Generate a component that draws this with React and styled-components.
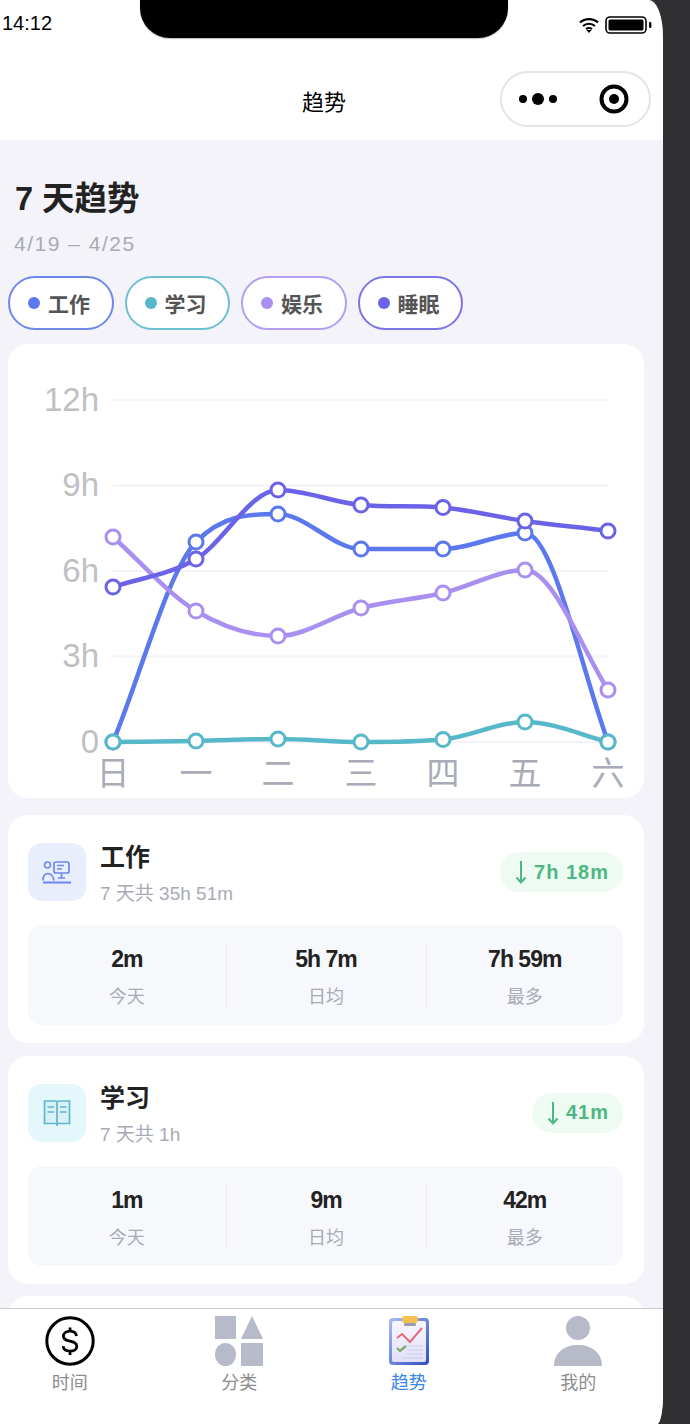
import React from 'react';
import styled, { createGlobalStyle } from 'styled-components';

const FONT = `'Liberation Sans', 'Noto Sans CJK SC', sans-serif`;

const chips = [
  { name: '工作', color: '#6f88ea', dot: '#5b78ee' },
  { name: '学习', color: '#6cc0cf', dot: '#56b8c9' },
  { name: '娱乐', color: '#b59ef0', dot: '#a98ff0' },
  { name: '睡眠', color: '#7a74e6', dot: '#6a63e8' },
];

const xs = [113, 196, 278, 361, 443, 525, 608];
const days = ['日', '一', '二', '三', '四', '五', '六'];
const grid = [
  { label: '12h', y: 400 },
  { label: '9h', y: 485.5 },
  { label: '6h', y: 571 },
  { label: '3h', y: 656.5 },
  { label: '0', y: 742 },
];
const series = [
  { color: '#5b78ee', ys: [742, 542, 514, 549, 549, 533, 742] },
  { color: '#a98ff0', ys: [537, 611, 636, 608, 593, 570, 690] },
  { color: '#6a63e8', ys: [587, 559, 490, 505, 507.5, 521, 531] },
  { color: '#56b8c9', ys: [742, 741, 739, 742, 739.5, 722, 742] },
];

const stats = [
  {
    name: '工作',
    total: '7 天共 35h 51m',
    delta: '7h 18m',
    tint: '#e9eefd',
    values: ['2m', '5h 7m', '7h 59m'],
    icon: 'work',
  },
  {
    name: '学习',
    total: '7 天共 1h',
    delta: '41m',
    tint: '#e4f7fa',
    values: ['1m', '9m', '42m'],
    icon: 'book',
  },
];
const statLabels = ['今天', '日均', '最多'];

// catmull-rom tangents, flat at peaks and clamped so the curve doesn't overshoot
const smoothPath = (ys) => {
  const n = ys.length;
  const slopes = [];
  for (let i = 0; i < n - 1; i++) slopes.push((ys[i + 1] - ys[i]) / (xs[i + 1] - xs[i]));
  const m = new Array(n).fill(0);
  for (let i = 1; i < n - 1; i++) {
    const s0 = slopes[i - 1];
    const s1 = slopes[i];
    if (s0 * s1 <= 0) continue;
    const limit = 3 * Math.min(Math.abs(s0), Math.abs(s1));
    m[i] = Math.sign(s0) * Math.min(Math.abs(s0 + s1) / 2, limit);
  }
  m[0] = slopes[0];
  m[n - 1] = slopes[n - 2] * 1.1;
  let d = `M${xs[0]} ${ys[0]}`;
  for (let i = 0; i < n - 1; i++) {
    const dx = (xs[i + 1] - xs[i]) / 3;
    d += ` C${xs[i] + dx} ${ys[i] + m[i] * dx} ${xs[i + 1] - dx} ${ys[i + 1] - m[i + 1] * dx} ${xs[i + 1]} ${ys[i + 1]}`;
  }
  return d;
};

const WorkIcon = () => (
  <svg width="30" height="23" viewBox="0 0 30 23" fill="none" stroke="#6f86ea" strokeWidth="1.7">
    <circle cx="5.5" cy="4" r="3" />
    <path d="M1 19.5c0-4.5 2-7 5-7s5 2.5 6 7" />
    <path d="M1 21.5h28" strokeWidth="2" />
    <rect x="12" y="1" width="15" height="11" rx="2" />
    <path d="M15 4.5h7M15 8h5M19.5 12v5M16 17h7" />
  </svg>
);

const BookIcon = () => (
  <svg width="28" height="28" viewBox="0 0 28 28" fill="none" stroke="#5fb7cb" strokeWidth="1.7">
    <path d="M1.5 2h10.5c1.2 0 2 .6 2 1.5v21H1.5zM26.5 2H16c-1.2 0-2 .6-2 1.5v21h12.5z" fill="#d9f1f6" />
    <path d="M4.5 8h6.5M4.5 13h6.5M17 8h6.5M17 13h6.5" />
    <path d="M14 24.5v2.5" />
  </svg>
);

const DollarIcon = () => (
  <svg width="50" height="50" viewBox="0 0 50 50" fill="none" stroke="#000">
    <circle cx="25" cy="25" r="23.2" strokeWidth="3" />
    <path d="M31.5 20c-.4-3-2.8-4.8-6.5-4.8-3.8 0-6.6 2-6.6 5 0 6.8 13.4 3.2 13.4 10 0 3-2.8 5-6.8 5-3.8 0-6.5-1.8-6.9-5M25 11.5v3.7M25 35.2v3.8" strokeWidth="2.8" />
  </svg>
);

const ShapesIcon = () => (
  <svg width="48" height="50" viewBox="0 0 48 50" fill="#b7bbc9">
    <rect x="0" y="0" width="21" height="23" />
    <path d="M37 0l11 23H26z" />
    <ellipse cx="10.5" cy="38.5" rx="10.5" ry="11.5" />
    <rect x="26" y="27" width="22" height="23" />
  </svg>
);

const ClipboardIcon = () => (
  <svg width="42" height="50" viewBox="0 0 42 50">
    <defs>
      <linearGradient id="board" x1="0" y1="0" x2="1" y2="1">
        <stop offset="0" stopColor="#a9bdf6" />
        <stop offset="1" stopColor="#2f4fc0" />
      </linearGradient>
      <linearGradient id="paper" x1="0" y1="0" x2="0" y2="1">
        <stop offset="0" stopColor="#f6f7fe" />
        <stop offset="1" stopColor="#e2dff9" />
      </linearGradient>
    </defs>
    <rect x="1" y="2" width="40" height="47" rx="4" fill="url(#board)" />
    <rect x="4" y="5" width="34" height="41" rx="2" fill="url(#paper)" />
    <rect x="14" y="0" width="16" height="7" rx="3" fill="#f4c04e" />
    <rect x="16" y="7" width="12" height="3" rx="1" fill="#9a9cb4" />
    <path d="M9 22l5-4 8 8 12-14" fill="none" stroke="#e8697a" strokeWidth="2" />
    <path d="M9 32l3 3 6-5" fill="none" stroke="#7cae68" strokeWidth="2.4" />
    <path d="M19 30h16M19 34h16M19 38h16M14 42h21" stroke="#c9cbea" strokeWidth="1.2" />
  </svg>
);

const PersonIcon = () => (
  <svg width="48" height="50" viewBox="0 0 48 50" fill="#b7bbc9">
    <ellipse cx="24" cy="12" rx="12" ry="12" />
    <path d="M0 50c0-13 10-21 24-21s24 8 24 21z" />
  </svg>
);

const tabs = [
  { label: '时间', icon: <DollarIcon /> },
  { label: '分类', icon: <ShapesIcon /> },
  { label: '趋势', icon: <ClipboardIcon />, active: true },
  { label: '我的', icon: <PersonIcon /> },
];

export default function App() {
  return (
    <>
      <GlobalStyle />
      <Phone>
        <Notch />
        <StatusBar>
          <Clock>14:12</Clock>
          <StatusIcons>
            <svg width="20" height="16" viewBox="0 0 20 16" fill="none" stroke="#000" strokeWidth="2.2">
              <path d="M1 5.5c5-4.6 13-4.6 18 0M4 9c3.4-3 8.6-3 12 0M7 12c1.8-1.2 4.2-1.2 6 0" />
              <path d="M10 16l-2.6-3h5.2z" fill="#000" stroke="none" />
            </svg>
            <svg width="47" height="18" viewBox="0 0 47 18" fill="none">
              <rect x="1" y="1" width="40" height="16" rx="4" stroke="#000" strokeWidth="1.6" />
              <rect x="3.5" y="3.5" width="35" height="11" rx="1.5" fill="#000" />
              <rect x="44" y="6" width="2.4" height="6" rx="1" fill="#000" />
            </svg>
          </StatusIcons>
        </StatusBar>
        <NavBar>
          <NavTitle>趋势</NavTitle>
          <Capsule>
            <svg width="38" height="14" viewBox="0 0 38 14" fill="#000">
              <circle cx="4" cy="7" r="4" />
              <circle cx="19" cy="7" r="6" />
              <circle cx="34" cy="7" r="4" />
            </svg>
            <svg width="30" height="30" viewBox="0 0 30 30" fill="none">
              <circle cx="15" cy="15" r="12.5" stroke="#000" strokeWidth="4" />
              <circle cx="15" cy="15" r="5" fill="#000" />
            </svg>
          </Capsule>
        </NavBar>
        <Main>
          <PageTitle>7 天趋势</PageTitle>
          <DateRange>4/19 – 4/25</DateRange>
          <ChipRow>
            {chips.map((chip) => (
              <Chip key={chip.name} $color={chip.color}>
                <ChipDot $color={chip.dot} />
                {chip.name}
              </Chip>
            ))}
          </ChipRow>
          <ChartCard>
            <svg width="636" height="454" viewBox="8 344 636 454">
              {grid.map((g) => (
                <g key={g.label}>
                  <line x1="113" x2="608" y1={g.y} y2={g.y} stroke="#f3f3f8" strokeWidth="2" />
                  <AxisY x="99" y={g.y - 1} textAnchor="end" dominantBaseline="central">
                    {g.label}
                  </AxisY>
                </g>
              ))}
              {days.map((day, i) => (
                <AxisX key={day} x={xs[i]} y="773" textAnchor="middle" dominantBaseline="central">
                  {day}
                </AxisX>
              ))}
              {series.map((s) => (
                <g key={s.color}>
                  <path d={smoothPath(s.ys)} fill="none" stroke={s.color} strokeWidth="4.5" strokeLinecap="round" />
                  {s.ys.map((y, i) => (
                    <circle key={i} cx={xs[i]} cy={y} r="7" fill="#fff" stroke={s.color} strokeWidth="3" />
                  ))}
                </g>
              ))}
            </svg>
          </ChartCard>
          <CardList>
            {stats.map((item) => (
              <StatCard key={item.name}>
                <CardHead>
                  <IconBox $tint={item.tint}>{item.icon === 'work' ? <WorkIcon /> : <BookIcon />}</IconBox>
                  <CardText>
                    <CardName>{item.name}</CardName>
                    <CardTotal>{item.total}</CardTotal>
                  </CardText>
                  <Delta>
                    <svg width="12" height="24" viewBox="0 0 12 24" fill="none" stroke="#4fb783" strokeWidth="2">
                      <path d="M6 1v21M1.5 17.5L6 22.5l4.5-5" />
                    </svg>
                    {item.delta}
                  </Delta>
                </CardHead>
                <StatBox>
                  {item.values.map((value, i) => (
                    <StatCol key={statLabels[i]} $divider={i > 0}>
                      <StatValue>{value}</StatValue>
                      <StatLabel>{statLabels[i]}</StatLabel>
                    </StatCol>
                  ))}
                </StatBox>
              </StatCard>
            ))}
            <StatCard />
          </CardList>
        </Main>
        <TabBar>
          {tabs.map((tab) => (
            <TabItem key={tab.label} $active={tab.active}>
              <TabIcon>{tab.icon}</TabIcon>
              {tab.label}
            </TabItem>
          ))}
        </TabBar>
      </Phone>
    </>
  );
}

const GlobalStyle = createGlobalStyle`
  html, body {
    margin: 0;
    height: 1424px;
    overflow: hidden;
    background: #303032;
    font-family: ${FONT};
  }
`;

const Phone = styled.div`
  position: relative;
  width: 663px;
  height: 1424px;
  display: flex;
  flex-direction: column;
  overflow: hidden;
  background: #fff;
  border-top-right-radius: 14px 36px;
  border-bottom-right-radius: 6px 30px;
`;

const Notch = styled.div`
  position: absolute;
  top: 0;
  left: 140px;
  width: 368px;
  height: 38px;
  background: #000;
  border-radius: 0 0 30px 30px;
  box-shadow: 0 1px 1px #bbb;
`;

const StatusBar = styled.div`
  height: 48px;
  flex-shrink: 0;
  display: flex;
  justify-content: space-between;
  align-items: center;
  padding: 0 11px 2px 2px;
  box-sizing: border-box;
`;

const Clock = styled.span`
  font-size: 20px;
  color: #000;
`;

const StatusIcons = styled.div`
  display: flex;
  align-items: center;
  gap: 6px;
  margin-top: 4px;
`;

const NavBar = styled.div`
  position: relative;
  height: 92px;
  flex-shrink: 0;
  display: flex;
  justify-content: center;
  align-items: center;
  padding: 12px 15px 0 0;
  box-sizing: border-box;
`;

const NavTitle = styled.div`
  font-size: 22px;
  color: #000;
`;

const Capsule = styled.div`
  position: absolute;
  top: 23px;
  right: 12px;
  width: 151px;
  height: 56px;
  box-sizing: border-box;
  display: flex;
  justify-content: space-between;
  align-items: center;
  padding: 0 20px 0 17px;
  border: 2px solid #e4e4e4;
  border-radius: 28px;
  background: #fff;
`;

const Main = styled.main`
  flex: 1;
  min-height: 0;
  overflow: hidden;
  padding: 39px 19px 0 8px;
  background: #f3f3f9;
`;

const PageTitle = styled.h1`
  margin: 0 0 0 7px;
  font-size: 32.5px;
  line-height: 40px;
  font-weight: 700;
  color: #222;
`;

const DateRange = styled.div`
  margin: 12px 0 0 6px;
  font-size: 21px;
  line-height: 26px;
  letter-spacing: 1.5px;
  color: #a8abb5;
`;

const ChipRow = styled.div`
  display: flex;
  gap: 11px;
  margin-top: 19px;
`;

const Chip = styled.div`
  width: 105.5px;
  height: 54px;
  box-sizing: border-box;
  display: flex;
  align-items: center;
  gap: 8px;
  padding-left: 18px;
  border: 2px solid ${({ $color }) => $color};
  border-radius: 27px;
  background: #fff;
  font-size: 21px;
  font-weight: 700;
  color: #555;
`;

const ChipDot = styled.span`
  width: 12px;
  height: 12px;
  border-radius: 50%;
  background: ${({ $color }) => $color};
`;

const ChartCard = styled.div`
  margin-top: 14px;
  height: 454px;
  border-radius: 20px;
  background: #fff;
  overflow: hidden;
  svg {
    display: block;
  }
`;

const AxisY = styled.text`
  font-family: ${FONT};
  font-size: 33px;
  fill: #c0c0c3;
`;

const AxisX = styled.text`
  font-family: ${FONT};
  font-size: 33px;
  fill: #a9acb8;
`;

const CardList = styled.div`
  display: flex;
  flex-direction: column;
  gap: 12.5px;
  margin-top: 17px;
`;

const StatCard = styled.section`
  min-height: 228px;
  box-sizing: border-box;
  padding: 28px 21px 18px 20px;
  border-radius: 20px;
  background: #fff;
`;

const CardHead = styled.div`
  display: flex;
  align-items: flex-start;
  height: 82px;
`;

const IconBox = styled.div`
  width: 58px;
  height: 58px;
  flex-shrink: 0;
  display: flex;
  justify-content: center;
  align-items: center;
  border-radius: 14px;
  background: ${({ $tint }) => $tint};
`;

const CardText = styled.div`
  flex: 1;
  margin-left: 14px;
`;

const CardName = styled.div`
  margin-top: -2px;
  font-size: 25px;
  line-height: 32px;
  font-weight: 700;
  color: #222;
`;

const CardTotal = styled.div`
  margin-top: 8px;
  font-size: 19px;
  line-height: 26px;
  color: #a8abb5;
`;

const Delta = styled.div`
  height: 40px;
  margin-top: 9px;
  display: flex;
  align-items: center;
  gap: 7px;
  padding: 0 14px 0 15px;
  border-radius: 20px;
  background: #eefbf3;
  font-size: 20px;
  font-weight: 700;
  letter-spacing: 1px;
  color: #4fb783;
`;

const StatBox = styled.div`
  height: 100px;
  display: grid;
  grid-template-columns: 197.5px 200px 1fr;
  align-items: center;
  border-radius: 14px;
  background: #f7f8fc;
`;

const StatCol = styled.div`
  height: 62px;
  display: flex;
  flex-direction: column;
  align-items: center;
  justify-content: space-between;
  border-left: ${({ $divider }) => ($divider ? '1px solid #e8e8ee' : 'none')};
`;

const StatValue = styled.div`
  margin-top: 3px;
  font-size: 23px;
  line-height: 24px;
  font-weight: 700;
  letter-spacing: -1px;
  color: #222;
`;

const StatLabel = styled.div`
  margin-bottom: -3px;
  font-size: 18px;
  line-height: 24px;
  color: #a8abb5;
`;

const TabBar = styled.nav`
  position: relative;
  height: 116px;
  flex-shrink: 0;
  box-sizing: border-box;
  display: grid;
  grid-template-columns: repeat(4, 169.5px);
  margin-left: -15px;
  padding-top: 7px;
  border-top: 1px solid #ccc;
  background: #fff;
`;

const TabItem = styled.div`
  display: flex;
  flex-direction: column;
  align-items: center;
  font-size: 18px;
  line-height: 24px;
  color: ${({ $active }) => ($active ? '#3a86e8' : '#8c8c8c')};
`;

const TabIcon = styled.div`
  height: 50px;
  margin-bottom: 5px;
  svg {
    display: block;
  }
`;
